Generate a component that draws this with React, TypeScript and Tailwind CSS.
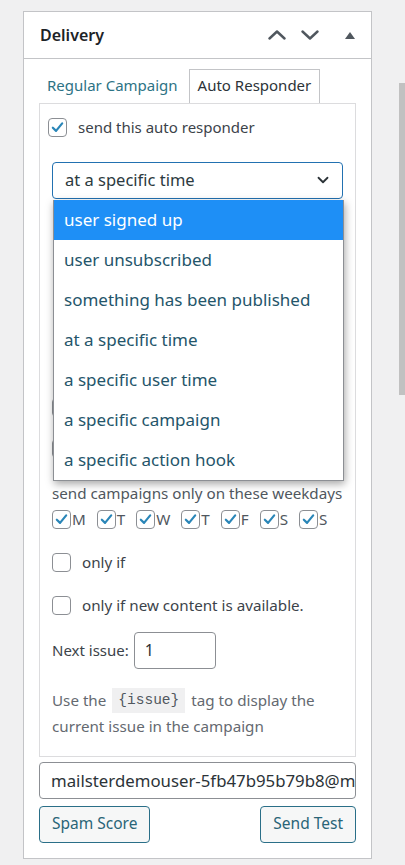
import { ChevronDown } from "lucide-react";

const options = [
  "user signed up",
  "user unsubscribed",
  "something has been published",
  "at a specific time",
  "a specific user time",
  "a specific campaign",
  "a specific action hook",
];

const weekdays = ["M", "T", "W", "T", "F", "S", "S"];

function Box({ checked }: { checked?: boolean }) {
  return (
    <span className="flex h-[19px] w-[19px] shrink-0 items-center justify-center rounded-[4px] border border-[#8c8f94] bg-white">
      {checked && (
        <svg viewBox="0 0 20 20" className="h-[17px] w-[17px]">
          <path d="M4.5 10.2 8.3 14 15.5 5.2" fill="none" stroke="#2a86b8" strokeWidth="2.6" strokeLinecap="round" strokeLinejoin="round" />
        </svg>
      )}
    </span>
  );
}

function Chevron({ up }: { up?: boolean }) {
  return (
    <svg viewBox="0 0 18 10" className="h-[10px] w-[18px]">
      <polyline
        points={up ? "1.5,8.5 9,1.5 16.5,8.5" : "1.5,1.5 9,8.5 16.5,1.5"}
        fill="none"
        stroke="#50575e"
        strokeWidth="2.4"
        strokeLinecap="round"
        strokeLinejoin="round"
      />
    </svg>
  );
}

export default function App() {
  return (
    <div className="flex min-h-[865px] bg-[#f0f0f1] font-['Noto_Sans',sans-serif] text-[#2c3338]">
      <div className="flex-1 pl-[23px] pt-[11px] pb-[8px]">
        <div className="w-[349px] border border-[#c3c4c7] bg-white">
          <div className="flex h-[47px] items-center border-b border-[#c3c4c7] pl-[16px] pr-[16px]">
            <h2 className="flex-1 text-[16px] font-semibold text-[#1d2327]">Delivery</h2>
            <span className="mr-[2px]">
              <Chevron up />
            </span>
            <span className="ml-[13px]">
              <Chevron />
            </span>
            <span className="ml-[26px] h-0 w-0 border-x-[5px] border-b-[7px] border-x-transparent border-b-[#50575e]" />
          </div>

          <div className="px-[15px] pt-[10px] pb-[15px]">
            <div className="flex items-end text-[15px]">
              <span className="px-[8px] pb-[6px] text-[#2d7385]">Regular Campaign</span>
              <span className="-mb-px ml-[3px] border border-b-0 border-[#c3c4c7] bg-white px-[8px] pt-[4px] pb-[7px] text-[#2c3338]">
                Auto Responder
              </span>
            </div>

            <div className="relative border border-[#dcdcde] px-[12px] pt-[14px] pb-[17px]">
              <label className="-ml-[4px] flex h-[19px] items-center gap-[11px] text-[15px] text-[#3c434a]">
                <Box checked />
                send this auto responder
              </label>

              <div className="mt-[25px] flex h-[37px] items-center rounded-[4px] border border-[#2271b1] pl-[12px] pr-[10px] text-[16.5px] text-[#2c3a40]">
                <span className="flex-1">at a specific time</span>
                <ChevronDown className="h-[18px] w-[18px] text-[#2c3338]" strokeWidth={2.4} />
              </div>

              <div className="h-[283px] pt-[199px]">
                <Box />
                <div className="mt-[22px]">
                  <Box />
                </div>
              </div>

              <ul className="absolute left-[13px] top-[96px] w-[291px] border border-t-0 border-[#8c8f94] bg-white text-[17px] text-[#24556a] shadow-[1px_3px_8px_rgba(0,0,0,0.35)]">
                {options.map((o, i) => (
                  <li
                    key={o}
                    className={`flex h-[40px] items-center pl-[10px] ${i === 0 ? "bg-[#1e8ff6] text-white" : ""}`}
                  >
                    {o}
                  </li>
                ))}
              </ul>

              <p className="text-[15.2px] leading-[22px] text-[#50575e]">send campaigns only on these weekdays</p>
              <div className="mt-[6px] flex h-[19px] items-center text-[15.2px] text-[#50575e]">
                {weekdays.map((d, i) => (
                  <span key={i} className="mr-[11px] flex items-center gap-[1px]">
                    <Box checked />
                    {d}
                  </span>
                ))}
              </div>

              <label className="mt-[24px] flex h-[19px] items-center gap-[11px] text-[15.2px] text-[#3c434a]">
                <Box />
                only if
              </label>
              <label className="mt-[24px] flex h-[19px] items-center gap-[11px] text-[15.2px] text-[#3c434a]">
                <Box />
                only if new content is available.
              </label>

              <div className="mt-[17px] flex items-center gap-[5px] text-[15px] text-[#3c434a]">
                <span>Next issue:</span>
                <input
                  readOnly
                  value="1"
                  className="h-[37px] w-[82px] rounded-[4px] border border-[#8c8f94] pl-[10px] text-[16px] text-[#2c3338] outline-none"
                />
              </div>

              <div className="mt-[19px] text-[15.2px] leading-[25px] text-[#646970]">
                <div className="flex h-[26px] items-center">
                  <span>Use the</span>
                  <code className="mx-[6px] bg-[#f0f0f1] px-[6px] font-['Liberation_Mono',monospace] text-[14.5px] leading-[25px] text-[#50575e]">
                    {"{issue}"}
                  </code>
                  <span>tag to display the</span>
                </div>
                <div>current issue in the campaign</div>
              </div>
            </div>

            <input
              readOnly
              value="mailsterdemouser-5fb47b95b79b8@mailster.co"
              className="mt-[5px] block h-[37px] w-full rounded-[4px] border border-[#8c8f94] pl-[11px] text-[16.8px] text-[#2c3338] outline-none"
            />

            <div className="mt-[7px] flex justify-between text-[15.5px] text-[#2a6577]">
              <button className="h-[37px] rounded-[4px] border border-[#2a6f88] bg-[#f6f7f7] px-[12px]">Spam Score</button>
              <button className="h-[37px] rounded-[4px] border border-[#2a6f88] bg-[#f6f7f7] px-[12px]">Send Test</button>
            </div>
          </div>
        </div>
      </div>
      <div className="w-[6px] pt-[83px]">
        <div className="h-[312px] bg-[#c1c1c1]" />
      </div>
    </div>
  );
}
